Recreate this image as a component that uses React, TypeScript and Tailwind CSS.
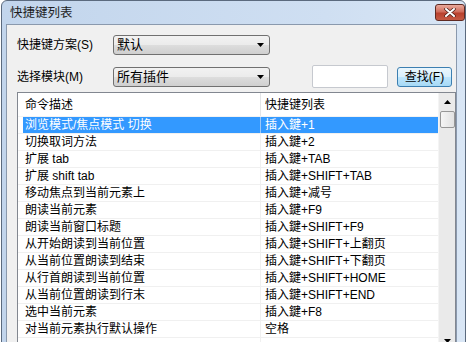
import React from 'react';

const FONT = "font-['Liberation_Sans','Noto_Sans_CJK_SC',sans-serif]";

const ROWS: [string, string][] = [
  ['浏览模式/焦点模式 切换', '插入鍵+1'],
  ['切换取词方法', '插入鍵+2'],
  ['扩展 tab', '插入鍵+TAB'],
  ['扩展 shift tab', '插入鍵+SHIFT+TAB'],
  ['移动焦点到当前元素上', '插入鍵+减号'],
  ['朗读当前元素', '插入鍵+F9'],
  ['朗读当前窗口标题', '插入鍵+SHIFT+F9'],
  ['从开始朗读到当前位置', '插入鍵+SHIFT+上翻页'],
  ['从当前位置朗读到结束', '插入鍵+SHIFT+下翻页'],
  ['从行首朗读到当前位置', '插入鍵+SHIFT+HOME'],
  ['从当前位置朗读到行末', '插入鍵+SHIFT+END'],
  ['选中当前元素', '插入鍵+F8'],
  ['对当前元素执行默认操作', '空格'],
  ['', ''],
];

const Arrow = ({ up }: { up?: boolean }) => (
  <svg width="7" height="4" viewBox="0 0 7 4">
    <path d={up ? 'M0 4 L3.5 0 L7 4 Z' : 'M0 0 L7 0 L3.5 4 Z'} fill="#000" />
  </svg>
);

const Combo = ({ label }: { label: string }) => (
  <div className="w-[157px] h-[20px] rounded-[3px] border border-[#707070] bg-[linear-gradient(#f2f2f2_0%,#ebebeb_50%,#dddddd_51%,#cfcfcf_100%)] flex items-center pl-[3px] pr-[5px]">
    <span className="flex-1 text-[13px] leading-[18px] text-black">{label}</span>
    <Arrow />
  </div>
);

export default function App() {
  return (
    <div className={`w-[470px] h-[342px] overflow-hidden bg-white ${FONT}`}>
      <div className="ml-[1px] w-[465px] h-[370px] rounded-t-[6px] border border-[#5b6a7e] bg-[linear-gradient(90deg,#c2d5ec,#cfdff2_70%,#d9e6f5)] flex flex-col">
        {/* title bar */}
        <div className="h-[23px] flex items-start">
          <span className="ml-[8px] mt-[5px] text-[12.5px] leading-[15px] text-[#1e1e1e]">快捷键列表</span>
          <div className="ml-auto mt-[3px] w-[30px] h-[17px] rounded-[3px] border border-[#5f2a22] bg-[linear-gradient(#e9a99c,#d06d5c_45%,#b9412e_55%,#c55a44)] flex items-center justify-center">
            <svg width="12" height="9" viewBox="0 0 12 9">
              <path d="M2 1 L10 8 M10 1 L2 8" stroke="#4a1d17" strokeWidth="3.4" strokeLinecap="round" />
              <path d="M2 1 L10 8 M10 1 L2 8" stroke="#fff" strokeWidth="2" strokeLinecap="round" />
            </svg>
          </div>
        </div>

        {/* client area */}
        <div className="ml-[4px] mr-[8px] flex-1 border border-[#8a99ad] bg-[#f0f0f0] flex flex-col text-black">
          <div className="mt-[10px] h-[20px] flex items-center">
            <span className="ml-[10px] w-[96px] text-[12px] leading-[16px]">快捷键方案(S)</span>
            <Combo label="默认" />
          </div>
          <div className="mt-[10px] h-[23px] flex items-center">
            <span className="ml-[10px] w-[96px] text-[12px] leading-[16px]">选择模块(M)</span>
            <Combo label="所有插件" />
            <div className="ml-[42px] w-[76px] h-[23px] rounded-[2px] border border-[#c6c9cf] bg-white" />
            <div className="ml-[9px] w-[55px] h-[20px] rounded-[3px] border border-[#3c7fb1] bg-[linear-gradient(#eaf6fd,#d9f0fc_50%,#bee6fd_51%,#a7d9f5)] flex items-center justify-center text-[12px] leading-[16px]">
              查找(F)
            </div>
          </div>

          {/* list */}
          <div className="mt-[4px] ml-[10px] w-[439px] h-[258px] border border-[#828790] bg-white flex">
            <div className="flex-1 flex flex-col overflow-hidden">
              <div className="h-[24px] shrink-0 flex text-[12px] leading-[24px] border-b border-[#f3f3f3]">
                <div className="w-[243px] pl-[7px] border-r border-[#e3e5e8]">命令描述</div>
                <div className="flex-1 pl-[4px]">快捷键列表</div>
              </div>
              {ROWS.map(([cmd, key], i) => (
                <div key={i} className="h-[17px] shrink-0 flex text-[12px] leading-[16px] border-b border-[#f0f0f0]">
                  <div className={`w-[243px] flex border-r ${i === 0 ? 'border-[#9cc8f7]' : 'border-[#f0f0f0]'}`}>
                    <div className="w-[5px]" />
                    <div className={`flex-1 pl-[2px] ${i === 0 ? 'bg-[#3399ff] text-white' : ''}`}>{cmd}</div>
                  </div>
                  <div className={`flex-1 pl-[4px] ${i === 0 ? 'bg-[#3399ff] text-white' : ''}`}>{key}</div>
                </div>
              ))}
            </div>
            {/* scrollbar */}
            <div className="w-[17px] bg-[#eaeaea] border-l border-[#f4f4f4] flex flex-col items-center">
              <div className="h-[17px] w-full flex items-center justify-center">
                <Arrow up />
              </div>
              <div className="mt-[1px] w-[15px] h-[17px] rounded-[2px] border border-[#979797] bg-[linear-gradient(90deg,#f5f5f5,#e2e2e2)]" />
              <div className="flex-1" />
              <div className="h-[17px] w-full flex items-center justify-center">
                <Arrow />
              </div>
            </div>
          </div>
        </div>
      </div>
    </div>
  );
}
